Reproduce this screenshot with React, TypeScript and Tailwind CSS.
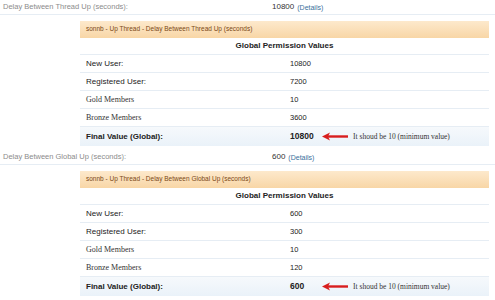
type Row = { label: string; value: string; serif?: boolean };

type BlockData = {
  heading: string;
  value: string;
  title: string;
  rows: Row[];
  final: string;
};

const blocks: BlockData[] = [
  {
    heading: "Delay Between Thread Up (seconds):",
    value: "10800",
    title: "sonnb - Up Thread - Delay Between Thread Up (seconds)",
    rows: [
      { label: "New User:", value: "10800" },
      { label: "Registered User:", value: "7200" },
      { label: "Gold Members", value: "10", serif: true },
      { label: "Bronze Members", value: "3600", serif: true },
    ],
    final: "10800",
  },
  {
    heading: "Delay Between Global Up (seconds):",
    value: "600",
    title: "sonnb - Up Thread - Delay Between Global Up (seconds)",
    rows: [
      { label: "New User:", value: "600" },
      { label: "Registered User:", value: "300" },
      { label: "Gold Members", value: "10", serif: true },
      { label: "Bronze Members", value: "120", serif: true },
    ],
    final: "600",
  },
];

const Arrow = () => (
  <svg width="26" height="9" viewBox="0 0 26 9" className="shrink-0">
    <line x1="6" y1="4.5" x2="26" y2="4.5" stroke="#d81e1e" strokeWidth="2.4" />
    <polygon points="0,4.5 8,0.5 6,4.5 8,8.5" fill="#d81e1e" />
  </svg>
);

const Block = ({ data, first }: { data: BlockData; first?: boolean }) => (
  <div className={first ? "" : "mt-[4px]"}>
    {/* setting heading */}
    <div className="flex h-[15px] items-center border-b border-[#e6edf4] text-[7.5px] leading-none">
      <span className="w-[272px] pl-[3px] text-[#8c8c8c]">{data.heading}</span>
      <span className="text-[8px] text-[#333]">{data.value}</span>
      <span className="ml-[3px] text-[7px] text-[#3a6f9c]">(Details)</span>
    </div>

    <div className="ml-[80px] mt-[6px] w-[409px]">
      <div className="flex h-[17px] items-center bg-gradient-to-b from-[#fde9cc] to-[#f8d6a6] pl-[6px] text-[6.5px] leading-none text-[#7a4816]">
        {data.title}
      </div>
      <div className="flex h-[17px] items-center justify-center border-b border-[#e6edf4] text-[8px] font-bold leading-none text-[#222]">
        Global Permission Values
      </div>
      {data.rows.map((r) => (
        <div key={r.label} className="flex h-[18px] items-center border-b border-[#e6edf4] text-[8px] leading-none text-[#222]">
          <span
            className={`w-[210px] pl-[6px] ${
              r.serif ? "font-['Liberation_Serif',serif] text-[#333]" : ""
            }`}
          >
            {r.label}
          </span>
          <span className="text-[7.5px]">{r.value}</span>
        </div>
      ))}
      <div className="flex h-[19px] items-center bg-gradient-to-b from-[#f6f9fc] to-[#eaf2f9] leading-none text-[#222]">
        <span className="w-[210px] pl-[6px] text-[8px] font-bold">Final Value (Global):</span>
        <span className="w-[32px] text-[8.5px] font-bold">{data.final}</span>
        <Arrow />
        <span className="ml-[5px] font-['Liberation_Serif',serif] text-[7.5px] text-[#333]">
          It shoud be 10 (minimum value)
        </span>
      </div>
    </div>
  </div>
);

export default function App() {
  return (
    <div className="h-[300px] w-[495px] overflow-hidden bg-white font-['Liberation_Sans',Arial,sans-serif]">
      {blocks.map((b, i) => (
        <Block key={b.heading} data={b} first={i === 0} />
      ))}
    </div>
  );
}
